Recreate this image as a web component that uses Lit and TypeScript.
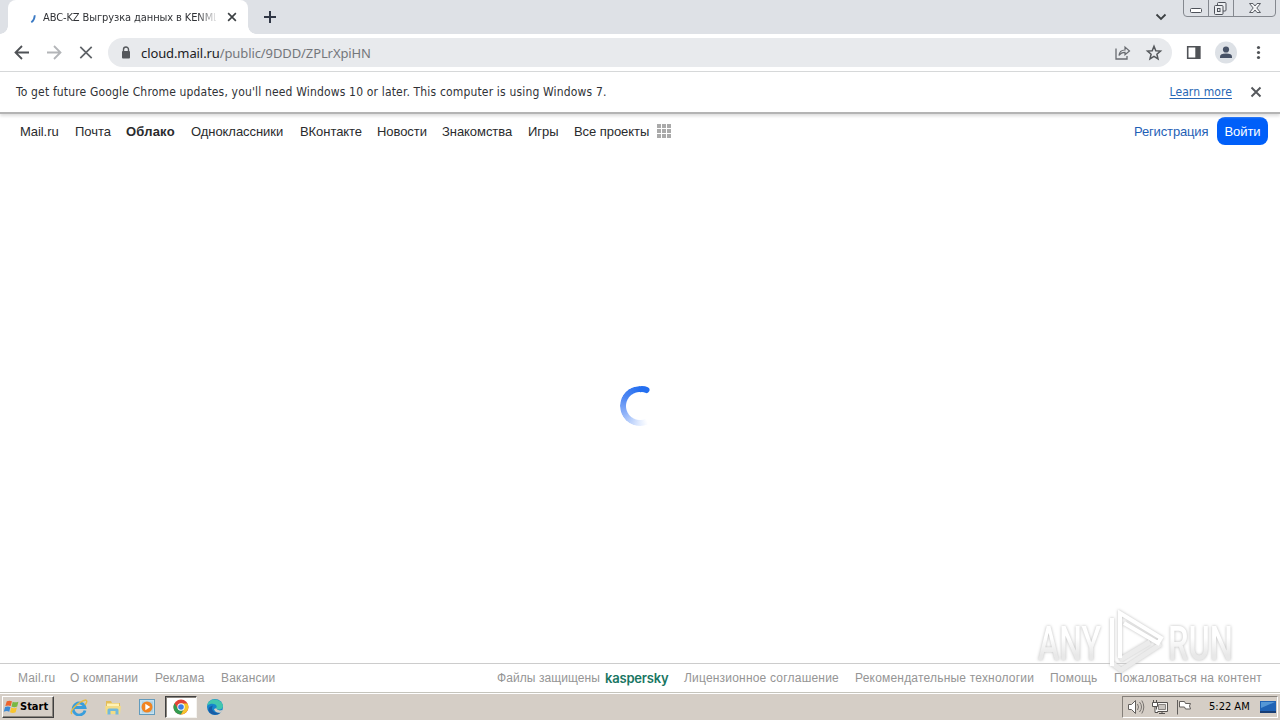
import { LitElement, html, css, svg } from 'lit';
import { customElement } from 'lit/decorators.js';

const NAV = [
  { label: 'Mail.ru', width: 39 },
  { label: 'Почта', width: 35 },
  { label: 'Облако', width: 49, active: true },
  { label: 'Одноклассники', width: 93 },
  { label: 'ВКонтакте', width: 61 },
  { label: 'Новости', width: 49 },
  { label: 'Знакомства', width: 70 },
  { label: 'Игры', width: 30 },
  { label: 'Все проекты', width: 75 },
];

const FOOTER_LEFT = [
  { label: 'Mail.ru', width: 36 },
  { label: 'О компании', width: 69 },
  { label: 'Реклама', width: 50 },
  { label: 'Вакансии', width: 55 },
];

const FOOTER_RIGHT = [
  { label: 'Лицензионное соглашение', width: 155 },
  { label: 'Рекомендательные технологии', width: 179 },
  { label: 'Помощь', width: 48 },
  { label: 'Пожаловаться на контент', width: 148 },
];

@customElement('browser-chrome')
export class BrowserChrome extends LitElement {
  static styles = css`
    :host {
      display: block;
      font-family: 'DejaVu Sans Condensed', 'Noto Sans', sans-serif;
      color: #303236;
    }
    svg {
      display: block;
      flex: none;
    }
    .tabs {
      height: 34px;
      background: #dee1e6;
      display: flex;
      align-items: flex-start;
    }
    .tab {
      position: relative;
      box-sizing: border-box;
      width: 240px;
      height: 34px;
      margin-left: 8px;
      padding: 0 10px 0 17px;
      display: flex;
      align-items: center;
      background: #fff;
      border-radius: 8px 8px 0 0;
    }
    .tab::before,
    .tab::after {
      content: '';
      position: absolute;
      bottom: 0;
      width: 8px;
      height: 8px;
    }
    .tab::before {
      left: -8px;
      background: radial-gradient(circle at 0 0, transparent 7.5px, #fff 8px);
    }
    .tab::after {
      right: -8px;
      background: radial-gradient(circle at 100% 0, transparent 7.5px, #fff 8px);
    }
    .title {
      width: 173px;
      margin: 0 10px 0 5px;
      white-space: nowrap;
      font-size: 11px;
      letter-spacing: -0.1px;
      mask-image: linear-gradient(to right, #000 155px, transparent 175px);
    }
    .plus {
      margin: 10px 0 0 15px;
    }
    .chevron {
      margin: 12px 16px 0 auto;
    }
    .window {
      margin-right: 4px;
    }
    .toolbar {
      height: 37px;
      background: #fff;
      border-bottom: 1px solid #d5d7d9;
      display: flex;
      align-items: center;
      padding: 0 14px;
    }
    .arrow {
      margin-right: 16px;
    }
    .omnibox {
      box-sizing: border-box;
      width: 1064px;
      height: 29px;
      margin-left: -2px;
      padding: 0 9px 0 10px;
      border-radius: 15px;
      background: #e8eaed;
      display: flex;
      align-items: center;
    }
    .url {
      margin: 0 auto 0 7px;
      font-family: 'Noto Sans', sans-serif;
      font-size: 13px;
      letter-spacing: -0.1px;
      color: #74777b;
      white-space: nowrap;
    }
    .host {
      color: #202124;
    }
    .star {
      margin-left: 14px;
    }
    .panel {
      margin-left: 13px;
    }
    .avatar {
      margin-left: 12px;
    }
    .menu {
      margin-left: 12px;
    }
    .infobar {
      height: 40px;
      background: #fff;
      display: flex;
      align-items: center;
      padding: 0 17px 0 16px;
      font-size: 12px;
      border-bottom: 2px solid #b4b4b4;
      box-shadow: 0 2px 3px #ddd;
      position: relative;
      white-space: nowrap;
    }
    .message {
      letter-spacing: 0.165px;
    }
    .learn {
      margin: 0 17px 0 auto;
      letter-spacing: 0.1px;
      color: #2767b5;
      text-decoration: underline;
      text-underline-offset: 2px;
    }
  `;

  private cross(size: number, color: string) {
    return html`<svg width=${size} height=${size} viewBox="0 0 14 14">
      <path d="M2.5 2.5l9 9M11.5 2.5l-9 9" fill="none" stroke=${color} stroke-width="1.9" />
    </svg>`;
  }

  render() {
    return html`
      <div class="tabs">
        <div class="tab">
          <svg width="13" height="16" viewBox="0 0 13 16">
            <path d="M9.800 6.200Q9.500 11 6.300 13.400" fill="none" stroke="#3b7ac4" stroke-width="1.8" />
          </svg>
          <div class="title">ABC-KZ Выгрузка данных в KENML</div>
          ${this.cross(12, '#3c4043')}
        </div>
        <svg class="plus" width="14" height="14" viewBox="0 0 14 14">
          <path d="M7 1v12M1 7h12" stroke="#303746" stroke-width="2" />
        </svg>
        <svg class="chevron" width="12" height="10" viewBox="0 0 12 10">
          <path d="M1.5 2.5L6 7l4.5-4.5" fill="none" stroke="#3c4043" stroke-width="1.8" />
        </svg>
        <svg class="window" width="93" height="17" viewBox="0 0 93 17">
          <path d="M.5 0v13q0 3.5 3.5 3.5h85q3.5 0 3.5-3.5V0M25.5 0v16.500M50.500 0v16.500" fill="none" stroke="#84888f" />
          <rect x="7.500" y="8.500" width="11" height="4" rx="1" fill="#fff" stroke="#4e525a" />
          <g fill="#eceef1" stroke="#4e525a">
            <rect x="34.500" y="2.500" width="8.500" height="8.500" rx="1" />
            <rect x="31.500" y="5.500" width="8.500" height="9" rx="1" />
            <rect x="34.500" y="8.500" width="2.500" height="3" />
          </g>
          <path d="M66.500 3.500h3.500l2 2.500 2-2.500h3.500l-3.700 4.500 3.700 4.500H74L72 10l-2 2.500h-3.500l3.700-4.500z" fill="#f4f5f7" stroke="#5b5f66" />
        </svg>
      </div>
      <div class="toolbar">
        <svg class="arrow" width="16" height="16" viewBox="0 0 16 16">
          <path d="M15 7.500H2M8 1L1.500 7.500 8 14" fill="none" stroke="#4f5256" stroke-width="1.800" />
        </svg>
        <svg class="arrow" width="16" height="16" viewBox="0 0 16 16">
          <path d="M1 7.500h13M8 1l6.500 6.500L8 14" fill="none" stroke="#b3b5b8" stroke-width="1.800" />
        </svg>
        <svg class="arrow" width="16" height="16" viewBox="0 0 16 16">
          <path d="M2.300 1.800l11.400 11.400M13.700 1.800L2.300 13.200" fill="none" stroke="#5f6368" stroke-width="1.700" />
        </svg>
        <div class="omnibox">
          <svg width="16" height="16" viewBox="0 0 16 16">
            <path d="M5.500 7V4.500a2.500 2.500 0 0 1 5 0V7" fill="none" stroke="#55585c" stroke-width="1.400" />
            <rect x="4" y="6" width="8" height="7.500" rx="1" fill="#55585c" />
          </svg>
          <div class="url"><span class="host">cloud.mail.ru</span>/public/9DDD/ZPLrXpiHN</div>
          <svg width="17" height="16" viewBox="0 0 17 16">
            <path d="M2 3.500V14h11v-3" fill="none" stroke="#686b70" stroke-width="1.300" />
            <path d="M5 10.500q.5-5.500 6-5.500V2l4.500 4L11 9.700V7.300q-4 0-6 3.200z" fill="none" stroke="#686b70" stroke-width="1.200" />
          </svg>
          <svg class="star" width="18" height="18" viewBox="0 0 18 18">
            <path d="M9 2.300l1.800 4.400 4.700.400-3.600 3.100 1.100 4.600L9 12.300l-4 2.500 1.100-4.600L2.500 7.100l4.700-.400z" fill="none" stroke="#55585c" stroke-width="1.500" />
          </svg>
        </div>
        <svg class="panel" width="17" height="16" viewBox="0 0 17 16">
          <path d="M2.700 1.700h12v11.600h-12z" fill="none" stroke="#505357" stroke-width="1.600" />
          <path d="M10.300 1h5v13h-5z" fill="#505357" />
        </svg>
        <svg class="avatar" width="24" height="24" viewBox="0 0 24 24">
          <circle cx="12" cy="11.500" r="11" fill="#dde1e6" />
          <circle cx="12" cy="8.500" r="3.100" fill="#475266" />
          <path d="M6 17v-1.300q0-3.200 6-3.200t6 3.200V17z" fill="#475266" />
        </svg>
        <svg class="menu" width="16" height="16" viewBox="0 0 16 16">
          <g fill="#505357"><circle cx="8.500" cy="2.500" r="1.600" /><circle cx="8.500" cy="7.500" r="1.600" /><circle cx="8.500" cy="12.500" r="1.600" /></g>
        </svg>
      </div>
      <div class="infobar">
        <div class="message">To get future Google Chrome updates, you'll need Windows 10 or later. This computer is using Windows 7.</div>
        <div class="learn">Learn more</div>
        ${this.cross(14, '#55585c')}
      </div>
    `;
  }
}

@customElement('cloud-page')
export class CloudPage extends LitElement {
  static styles = css`
    :host {
      display: flex;
      flex-direction: column;
      font-family: 'Liberation Sans', Arial, sans-serif;
      background: #fff;
      min-height: 0;
    }
    svg {
      display: block;
      flex: none;
    }
    .nav {
      height: 34px;
      padding: 0 12px 0 20px;
      display: flex;
      align-items: center;
      gap: 16px;
      font-size: 13px;
      letter-spacing: -0.06px;
      color: #2a2b2d;
      white-space: nowrap;
    }
    .active {
      font-weight: bold;
      letter-spacing: 0.2px;
    }
    .grid {
      margin-left: -9px;
    }
    .register {
      margin: 0 -8px 0 auto;
      width: 75px;
      letter-spacing: -0.15px;
      color: #1f5fb6;
    }
    .login {
      box-sizing: border-box;
      width: 51px;
      height: 28px;
      line-height: 29px;
      text-align: center;
      border-radius: 8px;
      background: #005ff9;
      color: #fff;
    }
    .body {
      flex: 1;
      display: flex;
      justify-content: center;
      align-items: center;
    }
    .ring {
      width: 40px;
      height: 40px;
      border-radius: 50%;
      background: conic-gradient(transparent 155deg, #e4edfe 180deg, #b7cefb 215deg, #8eb2f9 245deg, #4f87f2 300deg, #246ff0 360deg);
      mask-image: radial-gradient(circle, transparent 13.5px, #000 14.5px);
    }
    .spinner {
      position: relative;
    }
    .cap {
      position: absolute;
      left: 20px;
      top: 0;
    }
    .footer {
      height: 28px;
      border-top: 1px solid #ccc;
      padding: 0 18px;
      display: flex;
      align-items: center;
      gap: 16px;
      font-size: 12px;
      letter-spacing: 0.2px;
      color: #959595;
      white-space: nowrap;
    }
    .protected {
      margin-left: auto;
      width: 104px;
      letter-spacing: 0.08px;
    }
    .kaspersky {
      margin-left: -12px;
      width: 63px;
      font-family: Inter, sans-serif;
      font-weight: 600;
      font-size: 13px;
      letter-spacing: -0.2px;
      color: #187663;
    }
  `;

  render() {
    return html`
      <div class="nav">
        ${NAV.map(
          (item) => html`<div class=${item.active ? 'active' : ''} style="width:${item.width}px">${item.label}</div>`
        )}
        <svg class="grid" width="16" height="16" viewBox="0 0 16 16">
          ${[1, 6, 11].map((y) => [1, 6, 11].map((x) => svg`<rect x=${x} y=${y} width="4" height="4" fill="#aaa" />`))}
        </svg>
        <div class="register">Регистрация</div>
        <div class="login">Войти</div>
      </div>
      <div class="body">
        <div class="spinner">
          <div class="ring"></div>
          <svg class="cap" width="12" height="8" viewBox="0 0 12 8">
            <path d="M0 3.200Q4 2.800 6.500 4" fill="none" stroke="#246ff0" stroke-width="6" stroke-linecap="round" />
          </svg>
        </div>
      </div>
      <div class="footer">
        ${FOOTER_LEFT.map((item) => html`<div style="width:${item.width}px">${item.label}</div>`)}
        <div class="protected">Файлы защищены</div>
        <div class="kaspersky">kaspersky</div>
        ${FOOTER_RIGHT.map((item) => html`<div style="width:${item.width}px">${item.label}</div>`)}
      </div>
    `;
  }
}

@customElement('task-bar')
export class TaskBar extends LitElement {
  static styles = css`
    :host {
      box-sizing: border-box;
      height: 28px;
      border-top: 1px solid #c5c4bc;
      background: #d5cec6;
      box-shadow: inset 0 1px #fff;
      padding: 2px 2px 2px;
      display: flex;
      align-items: center;
      font-family: 'DejaVu Sans Condensed', 'Noto Sans', sans-serif;
      color: #000;
    }
    svg {
      display: block;
      flex: none;
    }
    .start {
      box-sizing: border-box;
      width: 52px;
      height: 22px;
      border: 1px solid;
      border-color: #fff #404040 #404040 #fff;
      box-shadow: inset -1px -1px #8a857e;
      display: flex;
      align-items: center;
      font-size: 11px;
      font-weight: bold;
      letter-spacing: 0;
    }
    .quick {
      margin-left: 9px;
      display: flex;
      gap: 2px;
    }
    .app {
      box-sizing: border-box;
      width: 32px;
      height: 22px;
      display: grid;
      place-items: center;
    }
    .running {
      background: #fff;
      border: 1px solid;
      border-color: #404040 #f5f3ef #f5f3ef #404040;
      box-shadow: inset 1px 1px #8a857e;
    }
    .tray {
      box-sizing: border-box;
      width: 156px;
      height: 22px;
      margin-left: auto;
      border: 1px solid;
      border-color: #85807a #fff #fff #85807a;
      display: flex;
      align-items: center;
      padding: 0 1px 0 4px;
      gap: 6px;
      font-size: 11px;
      white-space: nowrap;
    }
    .clock {
      width: 41px;
      margin: 0 3px 0 10px;
    }
  `;

  render() {
    return html`
      <div class="start">
        <svg width="17" height="18" viewBox="0 0 18 18">
          <path d="M4 3q3-1.500 5.500 0L8.200 8Q5.500 6.700 2.500 8z" fill="#ed642d" />
          <path d="M10.300 3.500q2.500 1.200 6 0L15 8.600q-3 1.200-6 0z" fill="#78b842" />
          <path d="M2.200 9q3-1.200 5.700 0l-1.300 5Q4 12.700.8 14z" fill="#3c8ad5" />
          <path d="M8.700 9.600q3 1.200 6 0l-1.300 5q-3 1.300-6 0z" fill="#f8c52f" />
        </svg>
        Start
      </div>
      <div class="quick">
        <div class="app">
          <svg width="18" height="18" viewBox="0 0 18 18">
            <path d="M15 12.500A6 6 0 1 1 15 9.500H4" fill="none" stroke="#3a9edc" stroke-width="2.800" />
            <path d="M2 16Q-.5 14 5 8.500T16 2q2 1-1 5" fill="none" stroke="#e6bb43" stroke-width="1.300" />
          </svg>
        </div>
        <div class="app">
          <svg width="18" height="18" viewBox="0 0 18 18">
            <path d="M2 3h5l1 2h8v10H2z" fill="#e3bd58" />
            <path d="M3 5.500h12V9H3z" fill="#fff2b5" />
            <path d="M1 8h16l-1 8H2z" fill="#f3dc86" />
            <path d="M3.500 16.500V12q0-1.500 1.500-1.500h8q1.500 0 1.500 1.500v4.500h-3V13h-5v3.500z" fill="#72b9dc" />
          </svg>
        </div>
        <div class="app">
          <svg width="18" height="18" viewBox="0 0 18 18">
            <rect x="1.500" y="1.500" width="15" height="15" fill="#c6e1ef" stroke="#629bbd" />
            <rect x="4" y="3.500" width="11" height="11" fill="#a9cfe3" />
            <circle cx="9" cy="9" r="5.500" fill="#f18420" />
            <path d="M7.300 5.800L12.300 9l-5 3.200z" fill="#fff" />
          </svg>
        </div>
        <div class="app running">
          <svg width="16" height="16" viewBox="0 0 16 16">
            <circle cx="8" cy="8" r="7.500" fill="#e34436" />
            <path d="M1.500 4.250A7.500 7.500 0 0 0 8 15.500L11.100 9.800 8 8 4.900 9.800z" fill="#329c50" />
            <path d="M8 15.500A7.500 7.500 0 0 0 14.500 4.500H8L11.100 9.800z" fill="#f5c52c" />
            <circle cx="8" cy="8" r="3.700" fill="#fff" />
            <circle cx="8" cy="8" r="2.800" fill="#3e7ee5" />
          </svg>
        </div>
        <div class="app">
          <svg width="18" height="18" viewBox="0 0 18 18">
            <circle cx="9" cy="9" r="8" fill="#1685cc" />
            <path d="M1.300 7.500C2.500-1 16 0 17 8c0 4-6 4.500-7 2.300 3-3.500-4-6.800-8.700-2.800z" fill="#42c6ae" />
            <path d="M7 7.500c-3 4 1 8.500 7.500 7.300A8 8 0 0 1 3 14Q1 9 7 7.500z" fill="#185ca6" />
            <path d="M10 10.300q1.500 3 6.700 1.700l-1.500 2.500Q9 15.500 8 11z" fill="#d5cec6" />
          </svg>
        </div>
      </div>
      <div class="tray">
        <svg width="18" height="16" viewBox="0 0 18 16">
          <path d="M1.500 5.500h3l4-4v13l-4-4h-3z" fill="#fff" stroke="#625f5c" />
          <path d="M10.500 5q2 3 0 6M12.500 3q4 5 0 10M14.800 1.500q4 6.500 0 13" fill="none" stroke="#77736f" />
        </svg>
        <svg width="18" height="16" viewBox="0 0 18 16">
          <path d="M5.500 3.500h11v9h-11zM8 14.500h6M11 12.500v2" fill="#f7f5f2" stroke="#55524f" />
          <path d="M7.500 5.500h7v5h-7z" fill="#c8c4bf" stroke="#888480" />
          <path d="M1.500 3.500h5v4h-5zM2.500 1v2.500M5.500 1v2.500M4 7.500v6h3" fill="#fff" stroke="#55524f" />
        </svg>
        <svg width="18" height="16" viewBox="0 0 18 16">
          <path d="M2.500 1v14.500M4.500 2.500h5l1 2h5q-2 2 0 5.500h-5l-1-2h-5z" fill="#fff" stroke="#625f5c" />
        </svg>
        <div class="clock">5:22 AM</div>
        <svg width="18" height="16" viewBox="0 0 18 16">
          <path d="M1 2h16v10H1z" fill="#2063b5" />
          <path d="M2 3h14L2 9z" fill="#5597d6" />
          <path d="M1 12h16v2H1z" fill="#173d74" />
        </svg>
      </div>
    `;
  }
}

@customElement('app-root')
export class AppRoot extends LitElement {
  static styles = css`
    :host {
      position: relative;
      display: flex;
      flex-direction: column;
      width: 1280px;
      height: 720px;
      overflow: hidden;
    }
    cloud-page {
      flex: 1;
    }
    .watermark {
      position: absolute;
      left: 1036px;
      top: 606px;
      filter: drop-shadow(0 0 1.5px #bbb);
    }
    .word {
      font-family: Roboto, sans-serif;
      font-size: 49px;
      font-weight: 500;
      fill: url(#fade);
    }
    .line {
      fill: none;
      stroke: #fff;
      stroke-width: 4;
    }
    .shade {
      fill: none;
      stroke: #ebebeb;
      stroke-width: 5;
    }
  `;

  render() {
    return html`
      <browser-chrome></browser-chrome>
      <cloud-page></cloud-page>
      <task-bar></task-bar>
      <svg class="watermark" width="240" height="72" viewBox="0 0 240 72">
        <linearGradient id="fade" x1="0" y1="0" x2="0" y2="1">
          <stop offset="0.400" stop-color="#fff" />
          <stop offset="0.700" stop-color="#e8e8e8" />
        </linearGradient>
        <text class="word" x="2" y="54" textLength="63" lengthAdjust="spacingAndGlyphs">ANY</text>
        <path class="shade" d="M77 58l8 6 40-26M84 54l30-18" />
        <path class="line" d="M76 60V12M84 52V7l41 25-3 5-34-20" />
        <text class="word" x="132" y="54" textLength="65" lengthAdjust="spacingAndGlyphs">RUN</text>
      </svg>
    `;
  }
}
